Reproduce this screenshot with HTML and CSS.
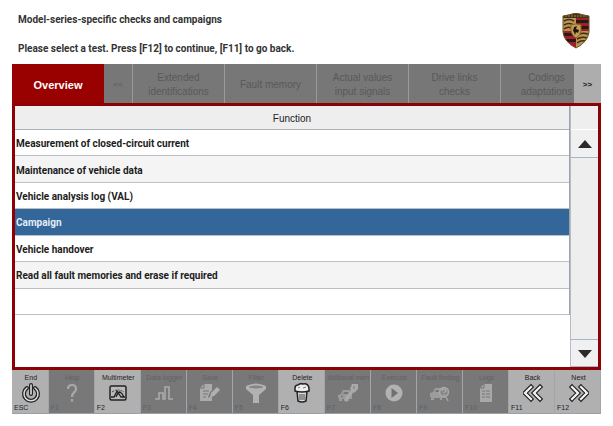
FILE: index.html
```html
<!DOCTYPE html>
<html lang="en">
<head>
  <meta charset="UTF-8">
  <meta name="viewport" content="width=device-width, initial-scale=1.0">
  <title>Checks and campaigns</title>
  <link rel="stylesheet" href="styles.css">
</head>
<body>
  <header class="header">
    <div class="header-text">
      <h1>Model-series-specific checks and campaigns</h1>
      <p>Please select a test. Press [F12] to continue, [F11] to go back.</p>
    </div>
    <svg class="crest" viewBox="0 0 28 36" role="img" aria-label="Crest">
      <defs>
        <clipPath id="shield"><path d="M1 3Q7 2 14 0Q21 2 27 3V19Q26 29 14 35Q2 29 1 19Z"/></clipPath>
      </defs>
      <g clip-path="url(#shield)">
        <path d="M0 0H28V36H0Z" fill="#b9934f"/>
        <path d="M14 5H28V18H14ZM0 18H14V36H0Z" fill="#a51d26"/>
        <path d="M14 7H28V10H14ZM14 13H28V16H14ZM0 20H14V23H0ZM0 26H14V29H0Z" fill="#241a18"/>
        <path d="M2 8Q7 5 12 8M2 12Q7 9 12 12M2 16Q6 13 9 15M15 22Q20 19 26 21M15 26Q20 23 25 25M15 30Q19 27 23 28" fill="none" stroke="#3c2c17" stroke-width="1.5"/>
        <path d="M0 0H28V5H0Z" fill="#3f3018"/>
        <path d="M3 3H25" stroke="#a78547" stroke-width="1" stroke-dasharray="2 1"/>
      </g>
      <path d="M9 12Q14 10 19 12V18Q18 23 14 25Q10 23 9 18Z" fill="#c69d52" stroke="#8a652c"/>
      <path d="M12 14L15 13L14 16L17 17L16 20L14 19L13 22L12 19L11 18Z" fill="#1d1712"/>
      <path d="M1 3Q7 2 14 0Q21 2 27 3V19Q26 29 14 35Q2 29 1 19Z" fill="none" stroke="#6d5027"/>
    </svg>
  </header>

  <main>
    <nav class="tabs">
      <div class="tab-list">
        <button class="tab active">Overview</button>
        <button class="tab prev" disabled>&lt;&lt;</button>
        <button class="tab" disabled>Extended<br>identifications</button>
        <button class="tab" disabled>Fault memory</button>
        <button class="tab" disabled>Actual values<br>input signals</button>
        <button class="tab" disabled>Drive links<br>checks</button>
        <button class="tab" disabled>Codings<br>adaptations</button>
      </div>
      <button class="tab next">&gt;&gt;</button>
    </nav>

    <section class="panel">
      <div class="list">
        <table>
          <thead>
            <tr><th>Function</th></tr>
          </thead>
          <tbody>
            <tr><td>Measurement of closed-circuit current</td></tr>
            <tr><td>Maintenance of vehicle data</td></tr>
            <tr><td>Vehicle analysis log (VAL)</td></tr>
            <tr class="selected"><td>Campaign</td></tr>
            <tr><td>Vehicle handover</td></tr>
            <tr><td>Read all fault memories and erase if required</td></tr>
            <tr><td>&nbsp;</td></tr>
          </tbody>
        </table>
      </div>
      <div class="scrollbar">
        <div class="corner"></div>
        <button class="scroll-btn" aria-label="Scroll up"><svg viewBox="0 0 14 8"><path d="M0 8L7 0L14 8Z"/></svg></button>
        <div class="track"></div>
        <button class="scroll-btn down" aria-label="Scroll down"><svg viewBox="0 0 14 8"><path d="M0 0H14L7 8Z"/></svg></button>
      </div>
    </section>

    <footer class="toolbar">
      <button class="tool end">
        <span class="label">End</span>
        <svg viewBox="0 0 20 20"><g fill="none" stroke-linecap="round"><path d="M6 5A7 7 0 1 0 14 5" stroke="#222" stroke-width="4"/><path d="M6 5A7 7 0 1 0 14 5" stroke="#ddd" stroke-width="1.5"/><path d="M10 2V11" stroke="#222" stroke-width="4"/><path d="M10 2V11" stroke="#eee" stroke-width="1.5"/></g></svg>
        <span class="key">ESC</span>
      </button>
      <button class="tool" disabled>
        <span class="label">Help</span>
        <svg viewBox="0 0 20 20"><path d="M6 6Q6 2 10 2Q14 2 14 6Q14 8 12 9.500Q10 11 10 14M10 16V18.500" fill="none" stroke="#a8a8a8" stroke-width="2.200"/></svg>
        <span class="key">F1</span>
      </button>
      <button class="tool">
        <span class="label">Multimeter</span>
        <svg viewBox="0 0 20 20"><rect x="2" y="3" width="16" height="14" rx="1.500" fill="#bbb" stroke="#222" stroke-width="1.500"/><path d="M4 9Q10 5 16 9" fill="none" stroke="#444" stroke-dasharray="2 1"/><path d="M3 14H6L9 8L13 14H17M8 14Q10 9 12 9Q14 10 16 14" fill="none" stroke="#222" stroke-width="1.300"/></svg>
        <span class="key">F2</span>
      </button>
      <button class="tool" disabled>
        <span class="label">Data logger</span>
        <svg viewBox="0 0 20 20"><path d="M1 16H5V10H9V16H11V4H15V16H19" fill="none" stroke="#aaa" stroke-width="1.600"/></svg>
        <span class="key">F3</span>
      </button>
      <button class="tool" disabled>
        <span class="label">Save</span>
        <svg viewBox="0 0 20 20"><path d="M0 5L4 1H12V7L9 11L8 15L12 13V18H0Z" fill="#ababab"/><path d="M10 14L11 10L17 4L20 7L14 13Z" fill="#b0b0b0"/><path d="M3 8H9M3 11H8M3 14H6M4 1V5H0" stroke="#777" fill="none"/></svg>
        <span class="key">F4</span>
      </button>
      <button class="tool" disabled>
        <span class="label">Filter</span>
        <svg viewBox="0 0 20 20"><path d="M0 3Q10 -2 20 3V6L13 12V20H7V12L0 6Z" fill="#b2b2b2"/><ellipse cx="10" cy="4" rx="7" ry="1.500" fill="#858585"/></svg>
        <span class="key">F5</span>
      </button>
      <button class="tool">
        <span class="label">Delete</span>
        <svg viewBox="0 0 20 20"><path d="M5 8H15L14 18Q10 20 6 18Z" fill="#ddd" stroke="#222" stroke-width="1.500"/><path d="M3 5Q3 2 6 2Q8 0 11 1Q16 0 17 5V8Q10 10 3 8Z" fill="#eee" stroke="#222" stroke-width="1.500"/><path d="M8 11V17M10 11V17M12 11V17" stroke="#444"/><path d="M6 5L8 4M11 5L14 4" stroke="#777"/></svg>
        <span class="key">F6</span>
      </button>
      <button class="tool" disabled>
        <span class="label">dditional men</span>
        <svg viewBox="0 0 20 20"><path d="M0 12L3 11L5 7H12L14 11V16H11V18H9V16H4V18H1V15H0Z" fill="#9c9c9c"/><path d="M5 11L6 9H10L11 11Z" fill="#777"/><path d="M7 18L15 7" stroke="#aaa" stroke-width="3"/><path d="M12 6L14 1H20V6L16 10Z" fill="#aaa"/><path d="M16 3V6" stroke="#777"/><circle cx="4" cy="13.500" r="1" fill="#777"/></svg>
        <span class="key">F7</span>
      </button>
      <button class="tool" disabled>
        <span class="label">Execute</span>
        <svg viewBox="0 0 20 20"><circle cx="10" cy="10" r="8.500" fill="#b2b2b2"/><path d="M7.500 5L14 10L7.500 15Z" fill="#707070"/></svg>
        <span class="key">F8</span>
      </button>
      <button class="tool" disabled>
        <span class="label">Fault finding</span>
        <svg viewBox="0 0 20 20"><path d="M0 10L3 9L5 5H13L15 9V15H12V17H10V15H4V17H1V14H0Z" fill="#9c9c9c"/><path d="M5 9L6 7H10L10 9Z" fill="#777"/><circle cx="14" cy="9" r="4.500" fill="#888" stroke="#aaa" stroke-width="1.500"/><path d="M12 8Q12 6 14 6Q16 6 16 8Q14 9 14 10M14 11V12M16 14L18 18" fill="none" stroke="#aaa" stroke-width="1.300"/></svg>
        <span class="key">F9</span>
      </button>
      <button class="tool" disabled>
        <span class="label">Logs</span>
        <svg viewBox="0 0 20 20"><path d="M4 5L8 1H16V19H4Z" fill="#a8a8a8"/><path d="M6 8H9M10 8H14M6 11H9M10 11H14M6 14H9M10 14H14M8 1V5H4" stroke="#777" fill="none"/></svg>
        <span class="key">F10</span>
      </button>
      <button class="tool">
        <span class="label">Back</span>
        <svg viewBox="0 0 20 20"><g fill="none" stroke-linecap="square"><path d="M8 4L2 10L8 16M17 4L11 10L17 16" stroke="#222" stroke-width="4.500"/><path d="M8 4L2 10L8 16M17 4L11 10L17 16" stroke="#f4f4f4" stroke-width="2.200"/></g></svg>
        <span class="key">F11</span>
      </button>
      <button class="tool">
        <span class="label">Next</span>
        <svg viewBox="0 0 20 20"><g fill="none" stroke-linecap="square"><path d="M3 4L9 10L3 16M12 4L18 10L12 16" stroke="#222" stroke-width="4.500"/><path d="M3 4L9 10L3 16M12 4L18 10L12 16" stroke="#f4f4f4" stroke-width="2.200"/></g></svg>
        <span class="key">F12</span>
      </button>
    </footer>
  </main>
</body>
</html>
```
FILE: styles.css
```css
* {
    box-sizing: border-box;
}

body {
    margin: 0;
    padding: 0 12px;
    background-color: #fff;
    font-family: "Liberation Sans", Arial, sans-serif;
    font-size: 10px;
    color: #222;
}

button {
    margin: 0;
    padding: 0;
    border: none;
    font-family: inherit;
    color: inherit;
    cursor: pointer;
}

button:disabled {
    cursor: default;
}

.header {
    display: flex;
    justify-content: space-between;
    height: 64px;
    padding: 13px 11px 0 6px;
}

.header h1,
.header p {
    margin: 0 0 16px;
    font-family: Roboto, "Liberation Sans", sans-serif;
    font-size: 10px;
    line-height: 13px;
    font-weight: bold;
    color: #333;
}

.crest {
    width: 28px;
    height: 36px;
}

/* tabs */
.tabs {
    display: flex;
    height: 39px;
}

.tab-list {
    flex: 1;
    display: flex;
    overflow: hidden;
}

.tab {
    flex: 0 0 92px;
    padding-top: 2px;
    border-right: 1px solid #9a9a9a;
    background-color: #777;
    color: #595959;
    font-size: 10px;
    line-height: 14px;
}

.tab.active {
    border-right: none;
    background-color: #990000;
    color: #fff;
    font-size: 11px;
    font-weight: bold;
}

.tab.prev {
    flex-basis: 29px;
    font-size: 8px;
}

.tab.next {
    flex-basis: 27px;
    border-right: none;
    background-color: #adadad;
    color: #222;
    font-size: 8px;
    font-weight: bold;
}

/* function list */
.panel {
    display: flex;
    height: 267px;
    border: 3px solid #8c0006;
}

.list {
    flex: 1;
    background-color: #fff;
}

table {
    width: 100%;
    height: 209px;
    border-spacing: 0;
    border-right: 1px solid #9aa4ae;
}

th,
td {
    padding: 2px 1px 0;
    border-bottom: 1px solid #bcc0c4;
    text-align: left;
}

th {
    height: 24px;
    background-color: #eee;
    border-color: #aab2ba;
    text-align: center;
    font-weight: normal;
}

td {
    font-family: Roboto, "Liberation Sans", sans-serif;
    font-weight: bold;
    color: #1c1c1c;
}

tbody tr:nth-child(2) td,
tbody tr:nth-child(6) td {
    background-color: #f4f4f4;
}

tbody .selected td {
    background-color: #336699;
    color: #e4edf5;
}

.scrollbar {
    display: flex;
    flex-direction: column;
    width: 28px;
    border-left: 1px solid #b4bcc6;
    background-color: #eee;
}

.corner {
    height: 24px;
    border-bottom: 1px solid #fff;
}

.scroll-btn {
    height: 28px;
    border-bottom: 1px solid #a9b5c4;
    background-color: #f0f0f0;
}

.scroll-btn.down {
    border-top: 1px solid #a9b5c4;
}

.scroll-btn svg {
    width: 14px;
    height: 8px;
    fill: #2a2a2a;
}

.track {
    flex: 1;
}

/* function keys */
.toolbar {
    display: flex;
    height: 44px;
    border-bottom: 1px solid #98a0a8;
}

.tool {
    flex: 46;
    min-width: 0;
    display: flex;
    flex-direction: column;
    align-items: center;
    justify-content: center;
    padding: 2px 0 0 2px;
    border-right: 1px solid #a0a6ac;
    background-color: #b0b0b0;
    font-size: 7px;
    line-height: 10px;
}

.tool:disabled {
    background-color: #787878;
    color: #626262;
}

.tool.end {
    flex: 36;
}

.tool svg {
    width: 20px;
    height: 20px;
}

.tool .label {
    white-space: nowrap;
}

.tool .key {
    align-self: flex-start;
}
```
